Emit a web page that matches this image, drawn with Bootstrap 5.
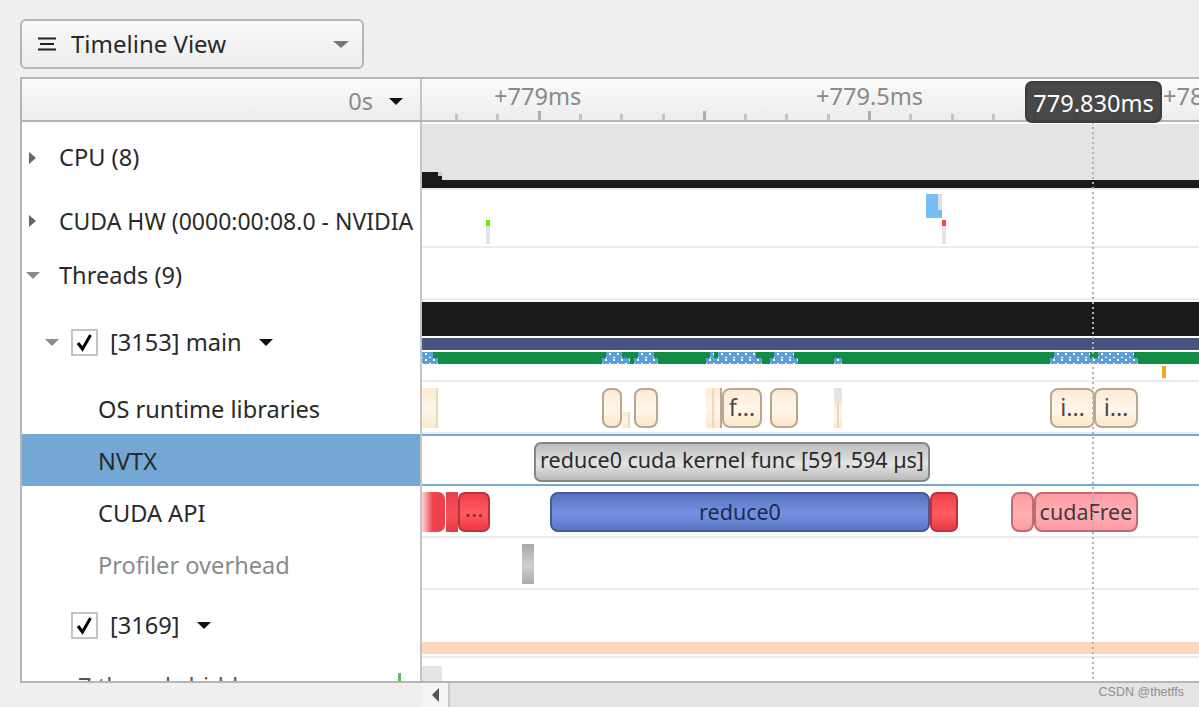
<!DOCTYPE html>
<html lang="en">
  <head>
    <meta charset="UTF-8" />
    <meta name="viewport" content="width=device-width, initial-scale=1.0" />
    <title>Timeline View</title>
    <link rel="stylesheet" href="https://cdn.jsdelivr.net/npm/bootstrap@5.3.0/dist/css/bootstrap.min.css" />
    <style>
      html, body { height: 707px; overflow: hidden; }
      body { background: #efefef; font-family: "Noto Sans", sans-serif; font-size: 23.6px; color: #2a2a2a; }
      .tl-page { padding-top: 19px; height: 707px; }
      .tl-view-btn { width: 344px; height: 50px; margin-left: 20px; padding: 0 13px 0 15px; background: linear-gradient(#fafafa, #ececec); border: 2px solid #b5b5b5; border-radius: 6px; font-size: 24px; color: #2a2a2a; }
      .tl-view-btn:hover { background: linear-gradient(#fafafa, #ececec); border-color: #b5b5b5; color: #2a2a2a; }
      .tl-btn-icon { margin-right: 14px; }
      .tl-panel { height: 606px; margin: 8px 0 0 20px; border: solid #b5b5b5; border-width: 2px 0 2px 2px; background: #fff; overflow: hidden; }
      .tl-head { height: 43px; background: linear-gradient(#fbfbfb, #ececec); border-bottom: 2px solid #b5b5b5; }
      .tl-head-name { width: 400px; flex: none; border-right: 2px solid #c4c4c4; padding: 4px 13px 0 0; color: #8a8a8a; }
      .tl-ruler { width: 777px; flex: none; }
      .tl-time { position: absolute; top: 0; color: #8a8a8a; white-space: nowrap; }
      .tl-tick { position: absolute; bottom: 0; width: 3px; height: 6px; background: #c4c4c4; }
      .tl-tick-major { height: 9px; background: #adadad; }
      .tl-row { flex: none; }
      .tl-h68 { height: 68px; }
      .tl-h58 { height: 58px; }
      .tl-h52 { height: 52px; }
      .tl-h82 { height: 82px; }
      .tl-h54 { height: 54px; }
      .tl-name { width: 400px; flex: none; padding-top: 3px; border-right: 2px solid #c4c4c4; white-space: nowrap; }
      .tl-name-selected { background: #74a7d3; }
      .tl-name-wide { font-size: 23px; }
      .tl-muted { color: #8a8a8a; }
      .tl-track { width: 777px; flex: none; position: relative; border-bottom: 2px solid #ececec; }
      .tl-track-selected { border-top: 2px solid #74a7d3; border-bottom-color: #74a7d3; }
      .tl-arrow-right { width: 0; height: 0; margin-left: 7px; margin-right: 23px; border-left: 7px solid #666; border-top: 6px solid transparent; border-bottom: 6px solid transparent; }
      .tl-arrow-down { width: 0; height: 0; border-top: 7px solid #8c8c8c; border-left: 7px solid transparent; border-right: 7px solid transparent; }
      .tl-arrow-black { border-top-color: #111; }
      .tl-arrow-btn { border-top-color: #777; border-left-width: 8px; border-right-width: 8px; }
      .tl-threads-arrow { margin-left: 4px; margin-right: 19px; }
      .tl-main-arrow { margin-left: 23px; margin-right: 12px; }
      .tl-check { width: 27px; height: 27px; flex: none; border: 2px solid #c4c4c4; background: #fff; }
      .tl-check-indent { margin-left: 49px; }
      .tl-thread-label { margin-left: 12px; margin-right: 17px; }
      .tl-leaf { padding-left: 76px; }
      .tl-hidden-row { padding-left: 56px; color: #555; }
      .tl-bar { position: absolute; white-space: nowrap; overflow: hidden; text-align: center; }
      .tl-solid { position: absolute; }
      .tl-dots { position: absolute; background-color: #5f9fd4; background-image: radial-gradient(#fff 1px, transparent 1.3px), radial-gradient(#fff 1px, transparent 1.3px); background-size: 8px 8px; background-position: 0 -2px, 4px 2px; }
      .tl-os { background: linear-gradient(#fdebd3, #fff6ea 55%, #fde7cb); border: 2px solid #b7a88f; border-radius: 8px; line-height: 35px; color: #4a4a4a; }
      .tl-os-flat { background: linear-gradient(#fdebd3, #fff6ea 55%, #fde7cb); }
      .tl-nvtx { background: linear-gradient(#bdbdbd, #e4e4e4 55%, #b9b9b9); border: 2px solid #858585; border-radius: 7px; line-height: 32px; font-size: 21.5px; color: #2a2a2a; }
      .tl-red { background: linear-gradient(#f0404c, #ff5a62 55%, #ee3844); border: 2px solid #b8323c; border-radius: 7px; line-height: 28px; color: #8a2a30; }
      .tl-red-fade { background: linear-gradient(90deg, #fdd7da, #ee4650 45%, #ee3c48); border-radius: 0 7px 7px 0; }
      .tl-red-flat { background: linear-gradient(#e83e4a, #f8505a 55%, #e63a46); }
      .tl-blue { background: linear-gradient(#5773bd, #7792e3 55%, #5a76c0); border: 2px solid #455a96; border-radius: 8px; line-height: 36px; font-size: 21.5px; color: #1e2a52; }
      .tl-pink { background: linear-gradient(#ff9aa2, #ffb0b6 55%, #fd9aa2); border: 2px solid #bd6d74; border-radius: 8px; line-height: 36px; font-size: 21.5px; color: #47393b; }
      .tl-gray { background: linear-gradient(#a9a9a9, #cfcfcf 55%, #a9a9a9); }
      .tl-cursor { position: absolute; top: 0; bottom: 0; left: 1070px; width: 2px; background: repeating-linear-gradient(#b0b0b0 0 2px, transparent 2px 5px); z-index: 2; }
      .tl-tip { position: absolute; top: 2px; left: 603px; width: 137px; height: 42px; background: rgba(58, 58, 58, .93); border: 2px solid #3c3c3c; border-radius: 7px; color: #fff; line-height: 40px; text-align: center; z-index: 3; }
      .tl-bottom { height: 24px; }
      .tl-scroll-btn { width: 28px; margin-left: 422px; background: #f4f4f4; border-right: 2px solid #c8c8c8; }
      .tl-arrow-left { width: 0; height: 0; border-right: 7px solid #555; border-top: 7px solid transparent; border-bottom: 7px solid transparent; }
      .tl-scroll-track { background: #e4e4e4; position: relative; }
      .tl-mark { position: absolute; right: 15px; top: 2px; font: 12.5px "Liberation Sans", sans-serif; color: #8f8f8f; }
    </style>
  </head>
  <body class="m-0">
    <div class="tl-page d-flex flex-column">
      <button type="button" class="btn tl-view-btn d-flex align-items-center flex-shrink-0">
        <svg width="20" height="16" viewBox="0 0 20 16" class="tl-btn-icon flex-shrink-0"><path d="M1 2.5h18M3 8h14M1 13.5h18" stroke="#222" stroke-width="2" fill="none" /></svg>
        <span class="flex-grow-1 text-start">Timeline View</span>
        <span class="tl-arrow-down tl-arrow-btn"></span>
      </button>

      <div class="tl-panel d-flex flex-column flex-shrink-0">
        <div class="d-flex tl-head flex-shrink-0 position-relative">
          <div class="tl-head-name d-flex align-items-center justify-content-end gap-3">
            <span>0s</span><span class="tl-arrow-down tl-arrow-black me-1"></span>
          </div>
          <div class="tl-ruler position-relative" id="ruler"></div>
        </div>

        <div class="position-relative flex-grow-1">
          <div class="d-flex tl-row tl-h68">
            <div class="tl-name d-flex align-items-center"><span class="tl-arrow-right"></span><span>CPU (8)</span></div>
            <div class="tl-track" data-top="122"></div>
          </div>
          <div class="d-flex tl-row tl-h58">
            <div class="tl-name tl-name-wide d-flex align-items-center pt-1"><span class="tl-arrow-right"></span><span>CUDA HW (0000:00:08.0 - NVIDIA</span></div>
            <div class="tl-track" data-top="190"></div>
          </div>
          <div class="d-flex tl-row tl-h52">
            <div class="tl-name d-flex align-items-center"><span class="tl-arrow-down tl-threads-arrow"></span><span>Threads (9)</span></div>
            <div class="tl-track" data-top="248"></div>
          </div>
          <div class="d-flex tl-row tl-h82">
            <div class="tl-name d-flex align-items-center">
              <span class="tl-arrow-down tl-main-arrow"></span>
              <span class="tl-check d-flex align-items-center justify-content-center">
                <svg width="19" height="19" viewBox="0 0 19 19"><path d="M3 10l4.5 6L15.5 2" stroke="#000" stroke-width="3" fill="none" /></svg>
              </span>
              <span class="tl-thread-label">[3153] main</span><span class="tl-arrow-down tl-arrow-black"></span>
            </div>
            <div class="tl-track" data-top="300"></div>
          </div>
          <div class="d-flex tl-row tl-h52">
            <div class="tl-name d-flex align-items-center tl-leaf"><span>OS runtime libraries</span></div>
            <div class="tl-track" data-top="382"></div>
          </div>
          <div class="d-flex tl-row tl-h52">
            <div class="tl-name tl-name-selected d-flex align-items-center tl-leaf"><span>NVTX</span></div>
            <div class="tl-track tl-track-selected" data-top="434"></div>
          </div>
          <div class="d-flex tl-row tl-h52">
            <div class="tl-name d-flex align-items-center tl-leaf"><span>CUDA API</span></div>
            <div class="tl-track" data-top="486"></div>
          </div>
          <div class="d-flex tl-row tl-h52">
            <div class="tl-name d-flex align-items-center tl-leaf tl-muted"><span>Profiler overhead</span></div>
            <div class="tl-track" data-top="538"></div>
          </div>
          <div class="d-flex tl-row tl-h68">
            <div class="tl-name d-flex align-items-center">
              <span class="tl-check d-flex align-items-center justify-content-center tl-check-indent">
                <svg width="19" height="19" viewBox="0 0 19 19"><path d="M3 10l4.5 6L15.5 2" stroke="#000" stroke-width="3" fill="none" /></svg>
              </span>
              <span class="tl-thread-label">[3169]</span><span class="tl-arrow-down tl-arrow-black"></span>
            </div>
            <div class="tl-track" data-top="590"></div>
          </div>
          <div class="d-flex tl-row tl-h54">
            <div class="tl-name d-flex align-items-center tl-hidden-row"><span>7 threads hidden</span></div>
            <div class="tl-track" data-top="658"></div>
          </div>
          <div class="tl-cursor"></div>
        </div>
      </div>

      <div class="d-flex tl-bottom flex-grow-1">
        <div class="tl-scroll-btn d-flex align-items-center justify-content-center"><span class="tl-arrow-left"></span></div>
        <div class="tl-scroll-track flex-grow-1"><span class="tl-mark">CSDN @thetffs</span></div>
      </div>
    </div>

    <script>
      // ticks along the ruler, every fourth one is longer
      const ruler = document.getElementById("ruler");
      for (let i = 0; i < 18; i++) {
        const tick = document.createElement("div");
        tick.className = i % 4 === 2 ? "tl-tick tl-tick-major" : "tl-tick";
        tick.style.left = Math.round(456 + 41.3 * i - 423) + "px";
        ruler.appendChild(tick);
      }
      [["+779ms", 494], ["+779.5ms", 816], ["+780ms", 1163]].forEach(([text, x]) => {
        const label = document.createElement("div");
        label.className = "tl-time";
        label.textContent = text;
        label.style.left = x - 422 + "px";
        ruler.appendChild(label);
      });
      const tip = document.createElement("div");
      tip.className = "tl-tip";
      tip.textContent = "779.830ms";
      ruler.appendChild(tip);

      // timeline events in screen coordinates: x, y, width, height, class, text, colour
      const events = [
        [422, 124, 777, 56, "tl-solid", "", "#e4e4e4"],
        [422, 172, 16, 8, "tl-solid", "", "#1a1a1a"],
        [438, 172, 4, 4, "tl-solid", "", "#cccccc"],
        [438, 176, 4, 4, "tl-solid", "", "#1a1a1a"],
        [422, 180, 777, 8, "tl-solid", "", "#1a1a1a"],
        [422, 188, 777, 2, "tl-solid", "", "#ececec"],

        [486, 220, 4, 6, "tl-solid", "", "#66ee00"],
        [486, 226, 4, 18, "tl-solid", "", "#e4e4e4"],
        [926, 194, 16, 24, "tl-solid", "", "#75bdf5"],
        [938, 194, 4, 16, "tl-solid", "", "#dedede"],
        [942, 220, 4, 6, "tl-solid", "", "#f94848"],
        [942, 226, 4, 18, "tl-solid", "", "#e4e4e4"],

        [422, 302, 777, 34, "tl-solid", "", "#1a1a1a"],
        [422, 338, 777, 12, "tl-solid", "", "#46557f"],
        [422, 352, 777, 12, "tl-solid", "", "#128d45"],
        [422, 352, 11, 6, "tl-dots"], [422, 358, 16, 6, "tl-dots"],
        [606, 352, 16, 6, "tl-dots"], [602, 358, 28, 6, "tl-dots"],
        [638, 352, 16, 6, "tl-dots"], [634, 358, 24, 6, "tl-dots"],
        [710, 352, 4, 6, "tl-dots"], [718, 352, 38, 6, "tl-dots"], [706, 358, 56, 6, "tl-dots"],
        [774, 352, 20, 6, "tl-dots"], [770, 358, 28, 6, "tl-dots"],
        [834, 358, 8, 6, "tl-dots"],
        [1054, 352, 36, 6, "tl-dots"], [1098, 352, 36, 6, "tl-dots"], [1050, 358, 88, 6, "tl-dots"],
        [1162, 366, 4, 12, "tl-solid", "", "#f5a623"],

        [422, 388, 16, 40, "tl-solid tl-os-flat"],
        [436, 388, 2, 40, "tl-solid", "", "#ead9c0"],
        [602, 388, 20, 40, "tl-bar tl-os"],
        [622, 412, 8, 16, "tl-solid tl-os-flat"],
        [628, 412, 2, 16, "tl-solid", "", "#ead9c0"],
        [634, 388, 24, 40, "tl-bar tl-os"],
        [706, 388, 16, 40, "tl-solid tl-os-flat"],
        [712, 388, 2, 40, "tl-solid", "", "#ead9c0"],
        [720, 388, 2, 40, "tl-solid", "", "#b7a88f"],
        [722, 388, 40, 40, "tl-bar tl-os", "f…"],
        [770, 388, 28, 40, "tl-bar tl-os"],
        [834, 388, 8, 14, "tl-solid", "", "#e4e4e4"],
        [834, 402, 8, 26, "tl-solid tl-os-flat"],
        [837, 402, 2, 26, "tl-solid", "", "#ead9c0"],
        [1050, 388, 45, 40, "tl-bar tl-os", "i…"],
        [1094, 388, 44, 40, "tl-bar tl-os", "i…"],

        [534, 440, 396, 40, "tl-bar tl-nvtx", "reduce0 cuda kernel func [591.594 µs]"],

        [422, 492, 23, 40, "tl-solid tl-red-fade"],
        [446, 492, 12, 40, "tl-solid tl-red-flat"],
        [458, 492, 32, 40, "tl-bar tl-red", "…"],
        [550, 492, 380, 40, "tl-bar tl-blue", "reduce0"],
        [930, 492, 28, 40, "tl-bar tl-red"],
        [1011, 492, 23, 40, "tl-bar tl-pink"],
        [1034, 492, 104, 40, "tl-bar tl-pink", "cudaFree"],

        [522, 544, 12, 40, "tl-solid tl-gray"],
        [422, 642, 777, 12, "tl-solid", "", "#fdd7bb"],
        [422, 666, 20, 16, "tl-solid", "", "#e4e4e4"],
        [398, 673, 3, 8, "tl-solid", "", "#5cc05c"],
      ];

      // drop every event into the row that holds its y
      const tracks = [...document.querySelectorAll(".tl-track")];
      events.forEach(([x, y, w, h, cls, text, colour]) => {
        const track = tracks.filter((t) => Number(t.dataset.top) <= y).pop();
        const item = document.createElement("div");
        item.className = cls;
        item.style.left = x - 422 + "px";
        item.style.top = y - Number(track.dataset.top) + "px";
        item.style.width = w + "px";
        item.style.height = h + "px";
        if (colour) item.style.backgroundColor = colour;
        if (text) item.textContent = text;
        track.appendChild(item);
      });
    </script>
  </body>
</html>
